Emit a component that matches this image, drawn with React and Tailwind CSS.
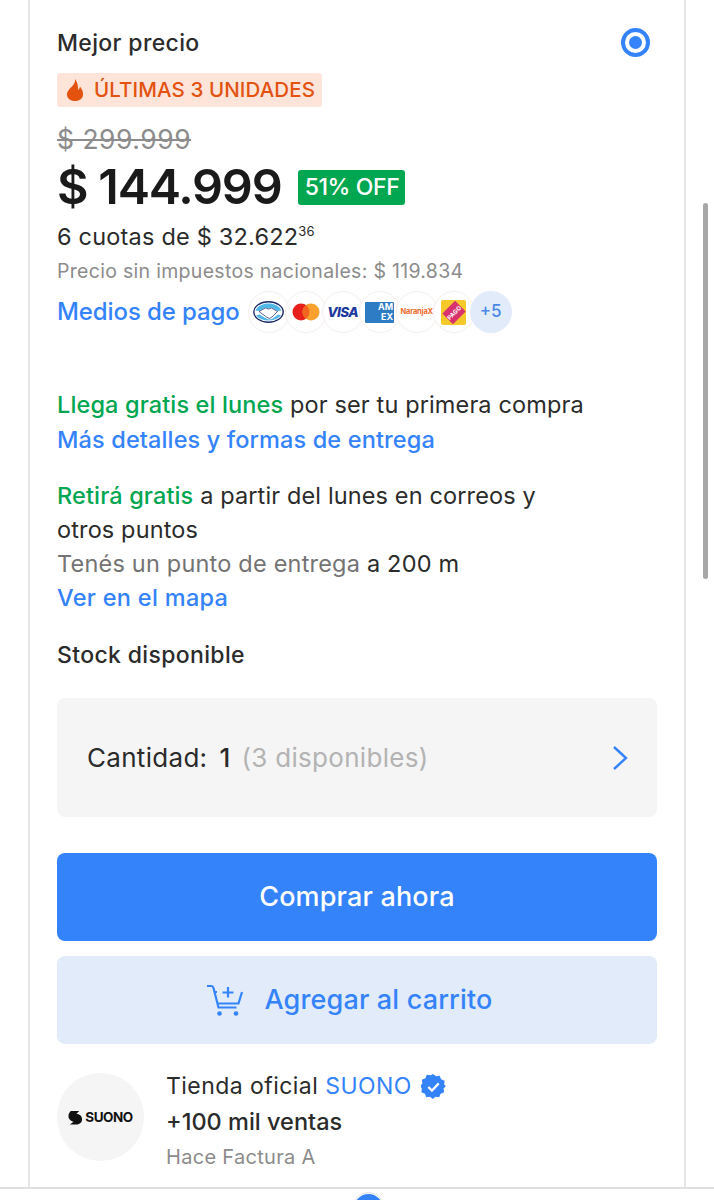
import React from "react";

const FONT = "font-['Inter','Liberation_Sans',sans-serif]";

function PayCircle({ children }) {
  return (
    <div className="-mr-[5px] w-[42px] h-[42px] shrink-0 rounded-full bg-white border border-[#f5efec] flex items-center justify-center overflow-hidden">
      {children}
    </div>
  );
}

function PaymentIcons() {
  return (
    <div className="flex items-center">
      <PayCircle>
        <svg width="31" height="22" viewBox="0 0 31 22">
          <ellipse cx="15.500" cy="11" rx="14.700" ry="10.200" fill="#fff" stroke="#1f2a6b" strokeWidth="1.400" />
          <path d="M2.500 9.500C5 4.500 10 2.500 15.500 2.500S26 4.500 28.500 9.500l-4 .5-6-3.500-3 1-3-1-6.500 3.500z" fill="#4fb8e8" />
          <path d="M3 14.500C6 18 10.500 19.500 15.500 19.500S25 18 28 14.500l-3-1-6 4.500-3.500.5-4-2-5-3z" fill="#4fb8e8" />
          <path d="M6 10.500l6.500-3.500 3 1 3-1 6 3.500-5.500 5.500-2.500 1.500-3-1.500z" fill="#fff" stroke="#1f2a6b" strokeWidth="0.700" />
        </svg>
      </PayCircle>
      <PayCircle>
        <svg width="28" height="18" viewBox="0 0 28 18">
          <circle cx="9" cy="9" r="8.500" fill="#e8201c" />
          <circle cx="19" cy="9" r="8.500" fill="#f9a02f" />
          <path d="M14 2.200a8.500 8.500 0 0 1 0 13.600a8.500 8.500 0 0 1 0-13.600z" fill="#f2641f" />
        </svg>
      </PayCircle>
      <PayCircle>
        <span className="text-[13.500px] font-extrabold italic tracking-[-0.6px] text-[#1c3a9e]">VISA</span>
      </PayCircle>
      <PayCircle>
        <div className="w-[29px] h-[21px] bg-[#2d7cc4] rounded-[1px] flex flex-col items-end justify-center pr-[1px] text-[9px] leading-[10px] font-bold text-white">
          <span>AM</span>
          <span>EX</span>
        </div>
      </PayCircle>
      <PayCircle>
        <span className="text-[7.500px] font-bold tracking-[-0.2px] text-[#ef6a2c]">NaranjaX</span>
      </PayCircle>
      <PayCircle>
        <div className="w-[25px] h-[25px] rounded-[2px] bg-[#f6c92b] flex items-center justify-center">
          <div className="w-[18px] h-[15px] bg-[#d8336f] -rotate-45 flex items-center justify-center text-[6px] font-bold text-white">
            PAGO
          </div>
        </div>
      </PayCircle>
      <div className="w-[42px] h-[42px] shrink-0 rounded-full bg-[#e1ebfa] flex items-center justify-center text-[17px] font-medium text-[#4a86e8]">
        +5
      </div>
    </div>
  );
}

export default function App() {
  return (
    <div className={`${FONT} relative w-[714px] h-[1200px] overflow-hidden bg-white text-[#2b2b2b]`}>
      {/* scrollbar */}
      <div className="absolute left-[703px] top-[203px] w-[5px] h-[376px] rounded-full bg-[#a8a8a8]" />

      {/* card */}
      <div className="ml-[28px] w-[658px] h-[1187px] border-x-2 border-[#e6e6e6] pl-[27px] pr-[27px] pt-[26px]">
        <div className="flex items-center justify-between h-[34px]">
          <span className="text-[23px] font-medium tracking-[0.35px]">Mejor precio</span>
          <div className="mr-[7px] -mt-[2px] w-[29px] h-[29px] rounded-full border-[4px] border-[#3483fa] flex items-center justify-center">
            <div className="w-[13px] h-[13px] rounded-full bg-[#3483fa]" />
          </div>
        </div>

        <div className="mt-[13px] w-[265px] h-[34px] rounded-[3px] bg-[#fee4d9] flex items-center pl-[8px] gap-[9px]">
          <svg width="20" height="24" viewBox="0 0 20 24">
            <path d="M10 1c.5 3-1 5-3 7.500C5 10.500 2 13 2 16.500 2 20.500 5.500 23 10 23s8-2.500 8-6.500c0-3-1-5.500-3-8-.2 1.500-.8 2.800-2 3.500.3-4-.5-8-3-11z" fill="#e3530f" />
          </svg>
          <span className="text-[20.500px] font-medium tracking-[0.1px] text-[#e3530f]">ÚLTIMAS 3 UNIDADES</span>
        </div>

        <div className="mt-[16px] h-[34px] flex items-center">
          <span className="text-[26.500px] line-through text-[#8c8c8c] tracking-[0.5px]">$ 299.999</span>
        </div>

        <div className="h-[60px] flex items-center">
          <span className="text-[48.500px] font-semibold text-[#1a1a1a] tracking-[-1.2px] leading-none">$ 144.999</span>
          <span className="ml-[17px] mt-[1px] w-[107px] h-[35px] rounded-[3px] bg-[#00a650] flex items-center justify-center text-[23px] font-medium text-white tracking-[-0.4px]">
            51% OFF
          </span>
        </div>

        <div className="mt-[3px] h-[34px] flex items-center text-[23.500px] tracking-[0.2px]">
          <span>6 cuotas de $ 32.622</span>
          <span className="text-[13px] -mt-[10px]">36</span>
        </div>

        <div className="mt-[2px] h-[32px] flex items-center text-[19.500px] text-[#8c8c8c] tracking-[0.3px]">
          Precio sin impuestos nacionales: $ 119.834
        </div>

        <div className="mt-[1px] h-[46px] flex items-center gap-[8px]">
          <span className="text-[24px] font-medium text-[#3483fa] tracking-[-0.1px]">Medios de pago</span>
          <PaymentIcons />
        </div>

        <div className="mt-[53px] text-[23.500px] leading-[34px] tracking-[0.13px]">
          <p>
            <span className="font-medium text-[#00a650]">Llega gratis el lunes</span> por ser tu primera compra
          </p>
          <p className="mt-[1px] font-medium text-[#3483fa]">Más detalles y formas de entrega</p>
        </div>

        <div className="mt-[22px] text-[23.500px] leading-[34px] tracking-[0.13px]">
          <p>
            <span className="font-medium text-[#00a650]">Retirá gratis</span> a partir del lunes en correos y
          </p>
          <p>otros puntos</p>
          <p className="tracking-[0.2px]">
            <span className="text-[#737373]">Tenés un punto de entrega</span> a 200 m
          </p>
          <p className="font-medium text-[#3483fa] tracking-[0.3px]">Ver en el mapa</p>
        </div>

        <div className="mt-[23px] h-[34px] flex items-center text-[23px] font-medium tracking-[0.35px]">
          Stock disponible
        </div>

        {/* cantidad */}
        <div className="mt-[26px] h-[119px] rounded-[8px] bg-[#f5f5f5] flex items-center pl-[30px] pr-[27px] text-[26px] tracking-[0.3px]">
          <span>Cantidad:</span>
          <span className="ml-[12px] font-medium">1</span>
          <span className="ml-[11px] text-[#b3b3b3]">(3 disponibles)</span>
          <svg className="ml-auto" width="20" height="26" viewBox="0 0 20 26" fill="none">
            <path d="M4 2l12 11L4 24" stroke="#3483fa" strokeWidth="2.400" />
          </svg>
        </div>

        <button className="mt-[36px] w-full h-[88px] rounded-[8px] bg-[#3483fa] text-white text-[27px] font-medium tracking-[0.15px]">
          Comprar ahora
        </button>

        <button className="mt-[15px] w-full h-[88px] rounded-[8px] bg-[#e1ebfa] text-[#3483fa] text-[27px] font-medium tracking-[0.15px] flex items-center justify-center gap-[22px] pr-[16px]">
          <svg width="37" height="33" viewBox="0 0 37 33" fill="none" stroke="#3483fa" strokeWidth="2.200">
            <path d="M1 2h4.500c1 0 1.500.5 2 2l5 19.500h18" />
            <path d="M8 8h3M36 8l-3.500 11.500H12" />
            <path d="M22 3v10.500M16.500 8.500h11" />
            <circle cx="13.500" cy="29.500" r="2.300" fill="#3483fa" stroke="none" />
            <circle cx="30" cy="29.500" r="2.300" fill="#3483fa" stroke="none" />
          </svg>
          Agregar al carrito
        </button>

        {/* tienda */}
        <div className="mt-[29px] flex items-start gap-[22px]">
          <div className="w-[87px] h-[88px] rounded-full bg-[#f5f5f5] flex items-center justify-center gap-[2px]">
            <svg width="15" height="15" viewBox="0 0 16 16">
              <path d="M3 1h9L9 4c3 .5 6 2 6 6 0 4-4 5.500-7 5.500H2l4-3c-3-.5-5.500-2.500-5.500-6C.5 3.500 2 2 3 1z" fill="#111" />
            </svg>
            <span className="text-[13.500px] font-bold tracking-[-0.5px] text-[#111]">SUONO</span>
          </div>
          <div className="-mt-[4px]">
            <div className="h-[34px] flex items-center text-[23px] tracking-[0.45px]">
              <span>Tienda oficial</span>
              <span className="ml-[7px] text-[#3483fa]">SUONO</span>
              <svg className="ml-[9px]" width="25" height="25" viewBox="0 0 24 24">
                <path d="M12 0l3 2.300 3.700-.5 1.400 3.500 3.500 1.400-.5 3.800L24.900 12l-2.300 2.500.5 3.800-3.500 1.400-1.400 3.500-3.700-.5L12 25l-3-2.300-3.700.5-1.400-3.500-3.500-1.400.5-3.800L-.9 12l2.300-2.500-.5-3.800 3.500-1.400 1.400-3.500 3.700.5z" fill="#3483fa" transform="scale(.96)" />
                <path d="M7 12.500l3.500 3.500 6.500-7" fill="none" stroke="#fff" strokeWidth="2.200" />
              </svg>
            </div>
            <div className="mt-[1px] h-[36px] flex items-center text-[23.500px] font-medium tracking-[0px]">+100 mil ventas</div>
            <div className="h-[34px] flex items-center text-[20px] text-[#8c8c8c] tracking-[0.3px]">Hace Factura A</div>
          </div>
        </div>
      </div>

      {/* barra inferior */}
      <div className="relative h-[13px] border-t-2 border-[#e0e0e0] bg-white">
        <div className="absolute left-[352px] top-[3px] w-[33px] h-[33px] rounded-full border border-[#e0e0e0] p-[1px] bg-white">
          <div className="w-full h-full rounded-full bg-[#3483fa]" />
        </div>
      </div>
    </div>
  );
}
